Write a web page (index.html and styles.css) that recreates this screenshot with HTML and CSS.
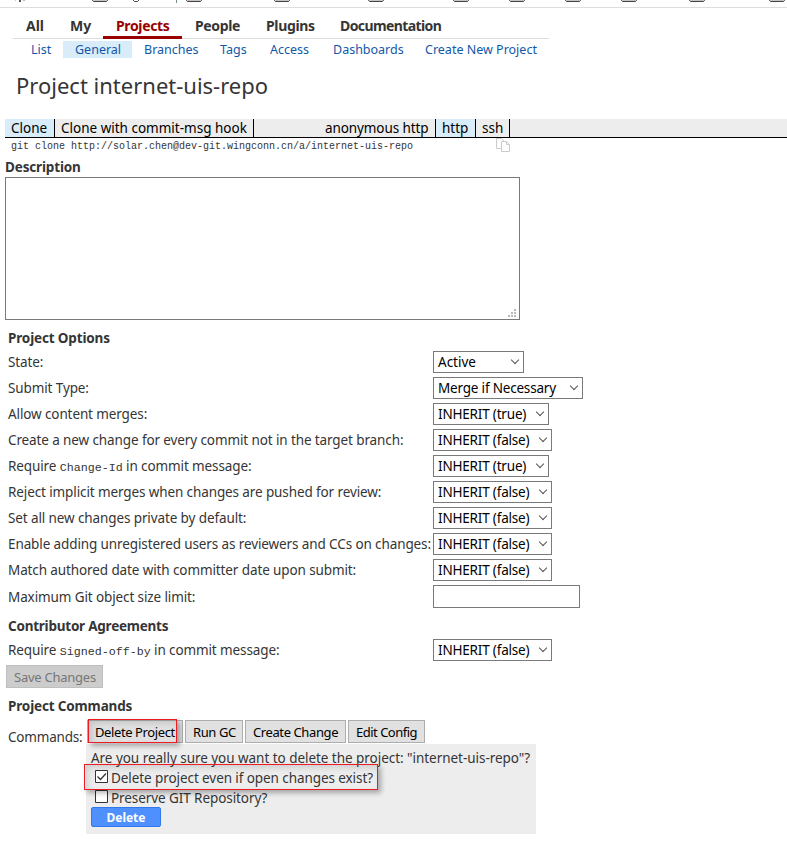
FILE: index.html
```html
<!DOCTYPE html>
<html lang="en">
<head>
<meta charset="utf-8">
<title>Project internet-uis-repo</title>
<link rel="stylesheet" href="styles.css">
</head>
<body>
<svg class="bookmarks" width="787" height="7" viewBox="0 0 787 7">
  <g fill="#555"><rect x="15" y="0" width="1" height="1" fill="#ccc"/><rect x="19" y="0" width="2" height="2"/><rect x="23" y="0" width="2" height="1" fill="#bbb"/><rect x="133" y="0" width="1" height="1"/><rect x="134" y="1" width="4" height="1"/><rect x="138" y="0" width="1" height="1"/><rect x="176" y="0" width="1" height="3" fill="#7a8f86"/></g>
  <g fill="#c4c4c4" stroke="#444"><path d="M92.500 -3v3.500l1 1h13l1-1v-3.500z"/><path d="M186.500 -3v3.500l1 1h13l1-1v-3.500z"/><path d="M274.500 -3v3.500l1 1h13l1-1v-3.500z"/><path d="M368.500 -3v3.500l1 1h13l1-1v-3.500z"/><path d="M453.500 -3v3.500l1 1h13l1-1v-3.500z"/><path d="M509.500 -3v3.500l1 1h13l1-1v-3.500z"/><path d="M565.500 -3v3.500l1 1h13l1-1v-3.500z"/><path d="M621.500 -3v3.500l1 1h13l1-1v-3.500z"/><path d="M689.500 -3v3.500l1 1h13l1-1v-3.500z"/><path d="M769.500 -3v3.500l1 1h13l1-1v-3.500z"/></g>
</svg>
<nav class="tabs">
  <a class="t-all">All</a><a class="t-my">My</a><a class="t-projects active">Projects</a><a class="t-people">People</a><a class="t-plugins">Plugins</a><a class="t-docs">Documentation</a>
</nav>
<nav class="subtabs">
  <a class="s-list">List</a><a class="s-general active">General</a><a class="s-branches">Branches</a><a class="s-tags">Tags</a><a class="s-access">Access</a><a class="s-dash">Dashboards</a><a class="s-create">Create New Project</a>
</nav>
<h1>Project internet-uis-repo</h1>
<div class="clonebar">
  <span class="c-clone on">Clone</span><span class="c-hook">Clone with commit-msg hook</span><span class="c-anon">anonymous http</span><span class="c-http on">http</span><span class="c-ssh">ssh</span>
</div>
<div class="command">
  <code>git clone http://solar.chen@dev-git.wingconn.cn/a/internet-uis-repo</code>
  <svg width="14" height="14" viewBox="0 0 14 14" fill="#fff" stroke="#ccc"><path d="M.5.500h5l3 3v7h-8z"/><path d="M5.500 3.500h5l3 3v7h-8z"/><path d="M10.500 3.500v3h3" fill="none"/></svg>
</div>
<h2 class="desc-title">Description</h2>
<div class="textarea"><svg width="8" height="8" viewBox="0 0 8 8" fill="#bbb"><path d="M6 0h2v2h-2zM3 3h2v2h-2zM6 3h2v2h-2zM0 6h2v2h-2zM3 6h2v2h-2zM6 6h2v2h-2z"/></svg></div>
<h2 class="opt-title">Project Options</h2>
<div class="options">
  <div class="row"><label>State:</label><span class="select w-active">Active<i></i></span></div>
  <div class="row"><label>Submit Type:</label><span class="select w-merge">Merge if Necessary<i></i></span></div>
  <div class="row"><label>Allow content merges:</label><span class="select w-true">INHERIT (true)<i></i></span></div>
  <div class="row"><label>Create a new change for every commit not in the target branch:</label><span class="select w-false">INHERIT (false)<i></i></span></div>
  <div class="row"><label>Require <code>Change-Id</code> in commit message:</label><span class="select w-true">INHERIT (true)<i></i></span></div>
  <div class="row"><label>Reject implicit merges when changes are pushed for review:</label><span class="select w-false">INHERIT (false)<i></i></span></div>
  <div class="row"><label>Set all new changes private by default:</label><span class="select w-false">INHERIT (false)<i></i></span></div>
  <div class="row"><label>Enable adding unregistered users as reviewers and CCs on changes:</label><span class="select w-false">INHERIT (false)<i></i></span></div>
  <div class="row"><label>Match authored date with committer date upon submit:</label><span class="select w-false">INHERIT (false)<i></i></span></div>
  <div class="row limit"><label>Maximum Git object size limit:</label><span class="input"></span></div>
</div>
<h2 class="agree-title">Contributor Agreements</h2>
<div class="row"><label>Require <code>Signed-off-by</code> in commit message:</label><span class="select w-false">INHERIT (false)<i></i></span></div>
<div class="save">Save Changes</div>
<h2 class="cmd-title">Project Commands</h2>
<div class="commands">
  <label>Commands:</label>
  <div class="body">
    <div class="buttons"><span class="button b-delete">Delete Project</span><span class="button b-gc">Run GC</span><span class="button b-change">Create Change</span><span class="button b-config">Edit Config</span></div>
    <div class="confirm">
      <p>Are you really sure you want to delete the project: "internet-uis-repo"?</p>
      <div class="check"><svg width="13" height="13" viewBox="0 0 13 13"><path d="M.5.500h12v12H.5z" fill="#fff" stroke="#333"/><path d="M2.500 6.500l3 3 5.500-6" fill="none" stroke="#333" stroke-width="1.300"/></svg><span class="k-open">Delete project even if open changes exist?</span></div>
      <div class="check"><svg width="13" height="13" viewBox="0 0 13 13"><path d="M.5.500h12v12H.5z" fill="#fff" stroke="#333"/></svg><span class="k-keep">Preserve GIT Repository?</span></div>
      <div class="primary">Delete</div>
    </div>
    <div class="mark mark-button"></div>
    <div class="mark mark-check"></div>
  </div>
</div>
</body>
</html>
```
FILE: styles.css
```css
* { box-sizing: border-box; }
body { margin: 0; width: 787px; height: 858px; overflow: hidden; background: #fff; color: #353535; font: 13.5px/18px "Noto Sans", "Open Sans", sans-serif; white-space: nowrap; }
h1, h2, p { margin: 0; }
code { font-family: "Liberation Mono", monospace; }
.bookmarks { display: block; }
.tabs { display: flex; height: 32px; border-top: 1px solid #ddd; position: relative; font-weight: 700; font-size: 14px; line-height: 35px; padding-left: 26px; letter-spacing: -.35px; }
.tabs::after { content: ""; position: absolute; left: 13px; bottom: 0; width: 536px; height: 1px; background: #ddd; }
.tabs a { height: 31px; }
.tabs .active { color: #900; border-bottom: 3px solid #900; z-index: 1; }
.t-all { width: 44px; letter-spacing: 0; } .t-my { width: 33px; letter-spacing: 0; } .t-projects { width: 79px; padding-left: 13px; }
.t-people { margin-left: 13px; width: 71px; } .t-plugins { width: 74px; } .t-docs { letter-spacing: -.6px; }
.subtabs { display: flex; margin-top: 2px; height: 17px; padding-left: 31px; font-size: 12.5px; line-height: 17px; color: #1358a8; }
.subtabs .active { background: #d8ecfa; }
.s-list { width: 32px; } .s-general { width: 69px; padding-left: 12px; } .s-branches { width: 88px; padding-left: 12px; }
.s-tags { width: 50px; } .s-access { width: 63px; } .s-dash { width: 92px; }
h1 { margin: 13px 0 0 16px; height: 48px; font-size: 22px; line-height: 29px; font-weight: 400; }
.clonebar { margin-left: 5px; height: 19px; display: flex; background: #ededed; border-bottom: 1px solid #000; color: #000; line-height: 18px; }
.clonebar span { border-right: 1px solid #000; padding-left: 6px; }
.clonebar .on { background: #d8ecfa; }
.c-clone { width: 50px; } .c-hook { width: 199px; } .c-anon { width: 182px; letter-spacing: -.1px; } .clonebar .c-anon { padding-left: 71px; } .c-http { width: 40px; } .c-ssh { width: 34px; }
.command { display: flex; height: 20px; padding-left: 11px; font-size: 10px; line-height: 18px; }
.command code { width: 485px; }
h2 { font-size: 13.5px; line-height: 18px; font-weight: 700; margin-left: 8px; letter-spacing: -.15px; }
.desc-title { margin: 0 0 0 5px; height: 19px; }
.textarea { margin-left: 5px; width: 515px; height: 143px; border: 1px solid #7a7a7a; display: flex; align-items: flex-end; justify-content: flex-end; padding: 2px 3px; }
.opt-title { margin-top: 9px; height: 20px; }
.row { display: flex; height: 26px; padding: 2px 0 2px 8px; line-height: 22px; }
.row label { width: 425px; letter-spacing: -.11px; }
.row code { font-size: 11.67px; letter-spacing: 0; line-height: 1; }
.limit { height: 27px; line-height: 24px; }
.select { height: 22px; border: 1px solid #7a7a7a; padding-left: 4px; color: #000; line-height: 21px; position: relative; letter-spacing: -.19px; }
.select i { position: absolute; right: 5px; top: 5px; width: 6px; height: 6px; border: solid #555; border-width: 0 1px 1px 0; transform: rotate(45deg); }
.w-active { width: 91px; letter-spacing: 0; } .w-merge { width: 150px; } .w-true { width: 116px; } .w-false { width: 119px; }
.input { width: 147px; height: 23px; border: 1px solid #7a7a7a; }
.agree-title { margin-top: 7px; height: 20px; letter-spacing: -.23px; }
.save { margin: 2px 0 0 6px; width: 97px; height: 23px; border: 1px solid #bfbfbf; background: #ccc; color: #777; padding-left: 7px; line-height: 22px; font-size: 13px; letter-spacing: -.25px; }
.cmd-title { margin-top: 9px; height: 23px; }
.commands { display: flex; padding-left: 8px; }
.commands label { width: 78px; padding-top: 8px; letter-spacing: -.2px; }
.body { position: relative; }
.buttons { display: flex; gap: 2px; padding-left: 1px; height: 24px; color: #000; font-size: 13px; letter-spacing: -.4px; }
.button { height: 23px; border: 1px solid #adadad; background: #e1e1e1; padding-left: 7px; line-height: 23px; }
.b-delete { width: 96px; } .b-gc { width: 58px; } .b-change { width: 101px; } .b-config { width: 77px; letter-spacing: -.5px; }
.confirm { width: 450px; height: 90px; background: #ededed; padding: 5px 0 0 5px; line-height: 19px; letter-spacing: -.04px; }
.check { display: flex; height: 20px; padding-left: 4px; gap: 3px; letter-spacing: -.08px; }
.check svg { margin-top: 1px; }
.confirm p { height: 20px; }
.primary { width: 70px; height: 20px; border: 1px solid #3079ed; border-radius: 2px; background: #4d90fe; color: #fff; font-weight: 700; font-size: 12px; text-align: center; line-height: 20px; margin-top: -2px; }
.mark { position: absolute; border: 1px solid #ed1c24; box-shadow: 3px 3px 5px rgba(0,0,0,.3), inset 3px 3px 6px rgba(0,0,0,.13); }
.mark-button { left: 2px; top: -1px; width: 89px; height: 24px; }
.mark-check { left: -2px; top: 44px; width: 294px; height: 26px; }
```
